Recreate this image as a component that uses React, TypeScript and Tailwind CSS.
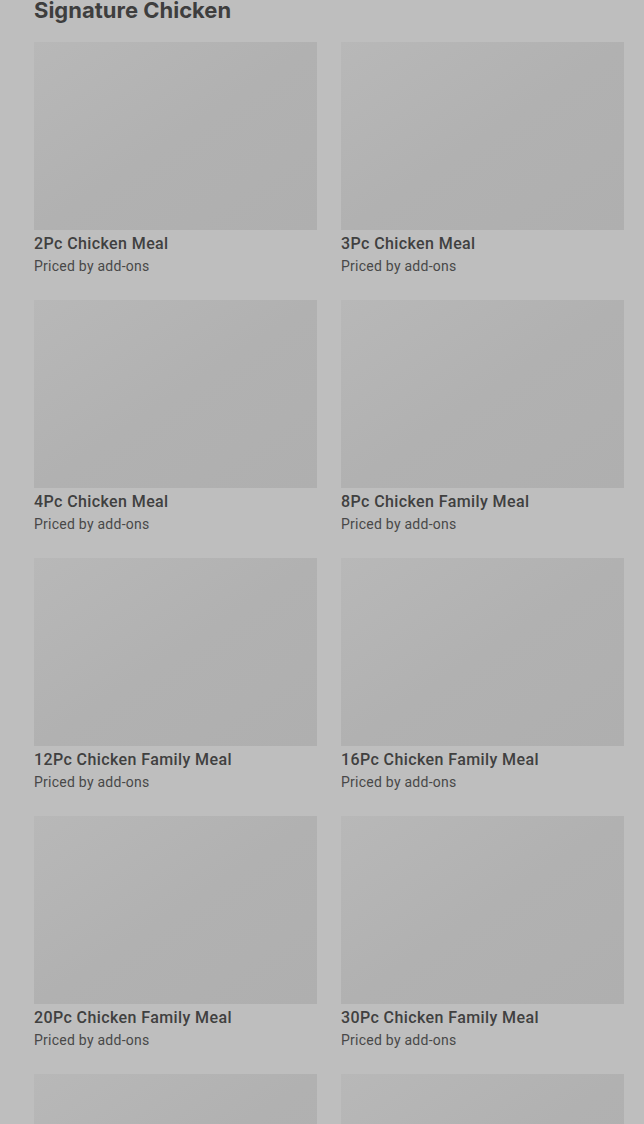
import React from "react";

const items = [
  "2Pc Chicken Meal",
  "3Pc Chicken Meal",
  "4Pc Chicken Meal",
  "8Pc Chicken Family Meal",
  "12Pc Chicken Family Meal",
  "16Pc Chicken Family Meal",
  "20Pc Chicken Family Meal",
  "30Pc Chicken Family Meal",
  "",
  "",
];

export default function App() {
  return (
    <div className="min-h-[1124px] w-[644px] overflow-hidden bg-[#bebebe]" style={{ fontFamily: "Roboto, 'Liberation Sans', sans-serif" }}>
      <div className="pl-[34px] pr-[20px]">
        <h2
          className="-mt-[6px] text-[22px] font-bold leading-[32px] text-[#3e3e3e]"
          style={{ fontFamily: "Inter, 'Liberation Sans', sans-serif" }}
        >
          Signature Chicken
        </h2>
        <div className="mt-[16px] grid grid-cols-2 gap-x-[24px] gap-y-[24px]">
          {items.map((t, i) => (
            <div key={i} className="flex flex-col">
              <div className="h-[188px] w-full bg-gradient-to-br from-[#b8b8b8] via-[#b1b1b1] to-[#afafaf]" />
              <div className="mt-[2px] text-[16px] font-medium leading-[24px] tracking-[0.4px] text-[#404040]">{t}</div>
              <div className="text-[14px] leading-[20px] tracking-[0.25px] text-[#484848]">{t ? "Priced by add-ons" : ""}</div>
            </div>
          ))}
        </div>
      </div>
    </div>
  );
}
